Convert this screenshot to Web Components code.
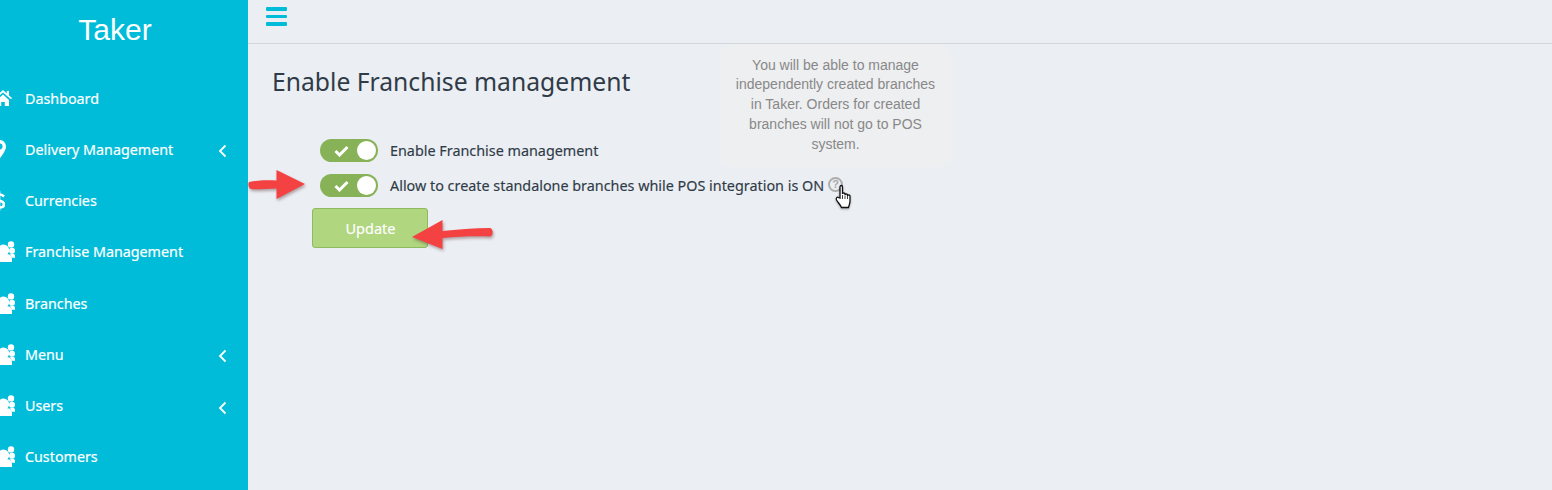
<!DOCTYPE html>
<html><head><meta charset="utf-8"><style>
html,body{margin:0;padding:0;height:490px;overflow:hidden;background:#ebeef3}
app-shell{font-family:"Noto Sans",sans-serif}
</style></head><body>
<app-shell>
<side-bar slot="side">
<nav-item icon="home">Dashboard</nav-item>
<nav-item icon="pin" chevron>Delivery Management</nav-item>
<nav-item icon="dollar">Currencies</nav-item>
<nav-item icon="users">Franchise Management</nav-item>
<nav-item icon="users">Branches</nav-item>
<nav-item icon="users" chevron>Menu</nav-item>
<nav-item icon="users" chevron>Users</nav-item>
<nav-item icon="users">Customers</nav-item>
</side-bar>
<top-bar slot="top"></top-bar>
<franchise-page slot="main">
<toggle-row>Enable Franchise management</toggle-row>
<toggle-row help>Allow to create standalone branches while POS integration is ON</toggle-row>
</franchise-page>
</app-shell>
<script>
const ICONS={
home:'<svg width="18" height="16" viewBox="0 0 18 16" style="margin-left:-6px"><path fill="#fff" d="M9 0 0 8l1 1.200L9 2.400l8 6.800L18 8l-3-2.600V1h-2.200v2.500zM3 10v6h4.200v-4h3.600v4H15v-6L9 4.600z"/></svg>',
pin:'<svg width="13" height="19" viewBox="0 0 13 19" style="margin-left:-7px"><path fill="#fff" fill-rule="evenodd" d="M6.500 0C3 0 0 2.800 0 6.400 0 10.500 4.500 16 6.500 19 8.500 16 13 10.500 13 6.400 13 2.800 10 0 6.500 0zm0 3.500a3 3 0 1 1 0 6 3 3 0 0 1 0-6z"/></svg>',
dollar:'<svg width="12" height="20" viewBox="0 0 12 20" style="margin-left:-7px"><path fill="none" stroke="#fff" stroke-width="2.600" d="M11 5.500C9.500 4 8 3.500 6 3.500 3.500 3.500 1.800 4.800 1.800 6.700 1.800 11 11 8.500 11 13.200c0 2-1.800 3.300-4.600 3.300-2.300 0-4-.8-5.400-2.300"/><path stroke="#fff" stroke-width="2.600" d="M6 0v20"/></svg>',
users:'<svg width="23" height="21" viewBox="0 0 23 21" style="margin-left:-8px"><g fill="#fff"><circle cx="19" cy="3.400" r="3.200"/><circle cx="20" cy="9.700" r="3"/><circle cx="11.500" cy="9.200" r="5.700"/><path d="M3 21v-3c0-3 2.500-4.800 5-4.800h7.500c2.500 0 4.500 1.800 4.500 4.800v3z"/><path d="M17.500 12.800h3.500c1.300 0 2 1 2 2.200v1.800h-3.500c-.2-1.800-.8-3-2-4z"/></g></svg>'
};
function shadow(el,html){el.attachShadow({mode:'open'}).innerHTML=html}
customElements.define('app-shell',class extends HTMLElement{constructor(){super();shadow(this,`<style>:host{display:grid;grid-template-columns:248px 1fr;grid-template-rows:44px 1fr;width:1552px;height:490px;overflow:hidden;color:#2f3b47}
.s{grid-row:1/3;min-width:0;min-height:0}.t,.m{min-width:0}</style>
<div class="s"><slot name="side"></slot></div><div class="t"><slot name="top"></slot></div><div class="m"><slot name="main"></slot></div>`)}});
customElements.define('side-bar',class extends HTMLElement{constructor(){super();shadow(this,`<style>:host{display:block;height:490px;background:#00bcd8;overflow:hidden}
.brand{height:72.500px;padding-top:11px;box-sizing:border-box;text-align:center;font:30px/38px "Liberation Sans",sans-serif;color:#fff;padding-right:18px}
</style><div class="brand">Taker</div><slot></slot>`)}});
customElements.define('nav-item',class extends HTMLElement{constructor(){super();
const ic=ICONS[this.getAttribute('icon')]||'';const ch=this.hasAttribute('chevron')?'<svg class="c" width="9" height="14" viewBox="0 0 9 14"><path d="M7.500 1.500 2 7l5.500 5.500" fill="none" stroke="#fff" stroke-width="1.800"/></svg>':'';
shadow(this,`<style>:host{display:flex;align-items:center;height:51.250px;font-size:14.300px;color:#fff;-webkit-text-stroke:.2px #fff}
.i{width:25px;flex:none;display:flex;align-items:center}.i svg{display:block;flex:none}
.l{flex:1;white-space:nowrap}.c{margin-right:21.500px;margin-top:4px;flex:none}</style>
<span class="i">${ic}</span><span class="l"><slot></slot></span>${ch}`)}});
customElements.define('top-bar',class extends HTMLElement{constructor(){super();shadow(this,`<style>:host{display:block;height:44px;box-sizing:border-box;border-bottom:1px solid #d3d7dc;padding:7px 0 0 18px}
.b{display:flex;flex-direction:column;gap:4px;width:21px}.b i{display:block;height:3.500px;background:#00bcd8;border-radius:1px}</style>
<div class="b"><i></i><i></i><i></i></div>`)}});
customElements.define('toggle-row',class extends HTMLElement{constructor(){super();
const help=this.hasAttribute('help')?`<span class="h">?</span>`:'';
shadow(this,`<style>:host{display:flex;align-items:center;height:23px;margin-bottom:12px;font-size:14.360px;color:#2f3b47;-webkit-text-stroke:.15px #2f3b47}
.t{width:58px;height:23px;border-radius:12px;background:#88b257;display:flex;align-items:center;justify-content:space-between;padding:0 2px 0 14px;box-sizing:border-box;flex:none;margin-right:12px}
.k{width:19px;height:19px;border-radius:50%;background:#fff}
.h{width:11px;height:11px;border:2.300px solid #adadad;border-radius:50%;margin:-2px 0 0 4px;font:bold 11px/11px "Liberation Sans",sans-serif;color:#a8a8a8;text-align:center;flex:none;-webkit-text-stroke:0}
.l{white-space:nowrap}</style>
<span class="t"><svg width="15" height="12" viewBox="0 0 15 12"><path d="M1.500 6 5.500 10 13.500 2" fill="none" stroke="#fff" stroke-width="3"/></svg><span class="k"></span></span><span class="l"><slot></slot></span>${help}`)}});
customElements.define('franchise-page',class extends HTMLElement{constructor(){super();shadow(this,`<style>:host{display:block;position:relative;height:446px;padding:0 0 0 24px;box-sizing:border-box}
h1{margin:0;padding-top:19px;height:95px;box-sizing:border-box;font-weight:400;font-size:24.700px;line-height:38px;color:#2f3b47}
.form{padding-left:48px}
button{display:block;margin:-1px 0 0 -8px;width:116px;height:40px;background:#b0d680;border:1px solid #8fbb5f;border-radius:3px;color:#fff;font:14.500px "Noto Sans",sans-serif;padding:0 0 0 1px;-webkit-text-stroke:.15px #fff}
.tip{position:absolute;left:471px;top:0;width:233px;height:123px;box-sizing:border-box;background:#eeeff1;border-radius:14px;padding:11.500px 10px;text-align:center;font:14px/19.800px "Liberation Sans",sans-serif;color:#888}
.ar{position:absolute;overflow:visible}
.cur{position:absolute;left:587px;top:140px;filter:drop-shadow(0 1px 1px rgba(0,0,0,.3))}</style>
<h1>Enable Franchise management</h1>
<div class="form"><slot></slot><button>Update</button></div>
<div class="tip">You will be able to manage independently created branches in Taker. Orders for created branches will not go to POS system.</div>
<svg class="ar" style="left:0;top:125px" width="60" height="32" viewBox="0 0 60 32"><path d="M1 13C10 11 20 11 28.500 11.500V1L57 15 28.500 30V19.500C18 20 8 20.500 3 20 0 19 0 14.500 1 13z" fill="#f44141" style="filter:drop-shadow(1px 2px 1.500px rgba(80,40,40,.4))"/></svg>
<svg class="ar" style="left:164px;top:175px" width="82" height="32" viewBox="0 0 82 32"><path d="M78 9C62 9 45 10.500 30.500 12V1L0 18 30.500 30V19C46 17.500 62 17 78 17.500 81.500 16.500 81.500 10 78 9z" fill="#f44141" style="filter:drop-shadow(1px 2px 1.500px rgba(80,40,40,.4))"/></svg>
<svg class="cur" width="18" height="25" viewBox="0 0 18 25"><path fill="#fff" stroke="#111" stroke-width="1.300" d="M5 14V3c0-2 2.500-2 2.500 0v7c0-1.500 2.500-1.500 2.500 0v1c0-1.500 2.500-1.500 2.500 0v1c0-1.500 2.500-1.500 2.500 0v5c0 3-1 4-1.500 6.500H6.500C5.500 21 3 18.500 1.500 16c-1-2 1-3.500 2-2.500z"/><path stroke="#111" stroke-width=".8" d="M7.500 11v4M10 11.500v3.500M12.500 12v3"/></svg>
`)}});
</script>
</body></html>
